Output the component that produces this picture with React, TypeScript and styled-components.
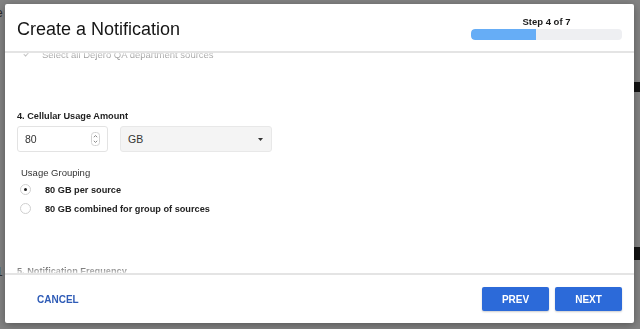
import React, { useLayoutEffect, useRef } from "react";
import styled, { createGlobalStyle } from "styled-components";

const GlobalStyle = createGlobalStyle`
  html, body { margin: 0; padding: 0; }
  body {
    width: 640px;
    height: 329px;
    overflow: hidden;
    background: #838383;
    font-family: "Liberation Sans", Arial, Helvetica, sans-serif;
  }
  * { box-sizing: border-box; }
`;

/* ---------- dimmed page behind the dialog ---------- */
const Backdrop = styled.div`
  width: 640px;
  height: 329px;
  display: flex;
  justify-content: space-between;
  background: #838383;
`;

const BackdropLeft = styled.div`
  display: flex;
  flex-direction: column;
  justify-content: space-between;
  margin-left: -4px;
  padding: 6px 0 50px;
  font-size: 12px;
  line-height: 14px;
  color: #2b2b2b;
`;

const BackdropRight = styled.div`
  display: flex;
  flex-direction: column;
  gap: 155px;
  padding-top: 82px;
`;

const Chip = styled.div<{ $h: number }>`
  width: 8px;
  height: ${(p) => p.$h}px;
  background: #121212;
`;

/* ---------- dialog ---------- */
const Overlay = styled.div`
  position: fixed;
  inset: 0;
  display: flex;
  padding: 4px 6px 6px 5px;
`;

const Modal = styled.div`
  flex: 1;
  display: flex;
  flex-direction: column;
  background: #ffffff;
  border-radius: 2px;
  box-shadow: 0 2px 8px rgba(0, 0, 0, 0.35);
  overflow: hidden;
`;

const Header = styled.header`
  height: 49px;
  flex: none;
  display: flex;
  align-items: flex-start;
  justify-content: space-between;
  padding: 12px 12px 0;
  border-bottom: 2px solid #e4e4e4;
`;

const Title = styled.h1`
  margin: 3px 0 0;
  font-size: 18px;
  line-height: 20px;
  font-weight: 400;
  color: #161616;
`;

const Progress = styled.div`
  width: 151px;
  display: flex;
  flex-direction: column;
  align-items: center;
  gap: 1px;
`;

const StepLabel = styled.div`
  font-size: 9.5px;
  line-height: 12px;
  font-weight: 700;
  color: #1a1a1a;
`;

const Track = styled.div`
  width: 100%;
  height: 11px;
  border-radius: 4px;
  background: #eeeff2;
  overflow: hidden;
`;

const Fill = styled.div`
  height: 100%;
  background: #66adf6;
  border-radius: 4px 0 0 4px;
`;

const Body = styled.div`
  flex: 1;
  overflow: hidden;
  -webkit-mask-image: linear-gradient(
    to bottom,
    rgba(0, 0, 0, 0.3) 0,
    #000 12px,
    #000 calc(100% - 10px),
    rgba(0, 0, 0, 0.2) 100%
  );
  mask-image: linear-gradient(
    to bottom,
    rgba(0, 0, 0, 0.3) 0,
    #000 12px,
    #000 calc(100% - 10px),
    rgba(0, 0, 0, 0.2) 100%
  );
`;

const Content = styled.div`
  display: flex;
  flex-direction: column;
  padding: 12px 12px 60px;
`;

const SectionTitle = styled.div<{ $gap?: number }>`
  margin-top: ${(p) => p.$gap ?? 0}px;
  font-size: 9.2px;
  line-height: 14px;
  font-weight: 700;
  color: #1e1e1e;
`;

const CheckRow = styled.label`
  height: 20px;
  display: flex;
  align-items: center;
  gap: 10px;
  padding-left: 3px;
  font-size: 9.5px;
  color: #555;
`;

const CheckBox = styled.span`
  width: 12px;
  height: 12px;
  display: flex;
  align-items: center;
  justify-content: center;
  color: #777;
`;

const FieldRow = styled.div`
  margin-top: 3px;
  display: flex;
  gap: 12px;
`;

const NumberField = styled.div`
  width: 91px;
  height: 26px;
  display: flex;
  align-items: center;
  justify-content: space-between;
  padding: 0 7px 0 7px;
  border: 1px solid #e3e3e3;
  border-radius: 3px;
  background: #fff;
  font-size: 10.5px;
  color: #333;
`;

const SelectField = styled.div`
  width: 152px;
  height: 26px;
  display: flex;
  align-items: center;
  justify-content: space-between;
  padding: 0 8px 0 7px;
  border: 1px solid #e8e8e8;
  border-radius: 3px;
  background: #f4f4f4;
  font-size: 10.5px;
  color: #333;
`;

const GroupLabel = styled.div`
  margin-top: 14px;
  margin-bottom: 1px;
  padding-left: 4px;
  font-size: 9.5px;
  line-height: 13px;
  color: #333;
`;

const RadioRow = styled.label`
  height: 19px;
  display: flex;
  align-items: center;
  gap: 14px;
  padding-left: 3px;
  font-size: 9.2px;
  font-weight: 700;
  color: #222;
`;

const Radio = styled.span<{ $checked?: boolean }>`
  width: 11px;
  height: 11px;
  border-radius: 50%;
  border: 1px solid #cfcfcf;
  background: #fff;
  display: flex;
  align-items: center;
  justify-content: center;
  &::after {
    content: "";
    width: 3px;
    height: 3px;
    border-radius: 50%;
    background: ${(p) => (p.$checked ? "#1e1e1e" : "transparent")};
  }
`;

const Footer = styled.footer`
  height: 50px;
  flex: none;
  display: flex;
  align-items: center;
  justify-content: space-between;
  padding: 0 12px;
  border-top: 2px solid #e4e4e4;
`;

const TextButton = styled.button`
  height: 24px;
  padding: 0 20px;
  border: none;
  background: none;
  font-family: inherit;
  font-size: 10px;
  font-weight: 700;
  color: #2f5cb7;
`;

const ButtonGroup = styled.div`
  display: flex;
  gap: 6px;
`;

const PrimaryButton = styled.button`
  width: 67px;
  height: 24px;
  border: none;
  border-radius: 2px;
  background: #2c6ad9;
  box-shadow: 0 1px 2px rgba(0, 0, 0, 0.2);
  font-family: inherit;
  font-size: 10px;
  font-weight: 700;
  color: #ffffff;
`;

const Spinner = () => (
  <svg width="9" height="14" viewBox="0 0 9 14" aria-hidden>
    <rect x="0.5" y="0.5" width="8" height="13" rx="3" fill="#fff" stroke="#d2d2d2" />
    <path d="M2.8 5.2 L4.5 3.6 L6.2 5.2" fill="none" stroke="#7a7a7a" strokeWidth="0.9" />
    <path d="M2.8 8.8 L4.5 10.4 L6.2 8.8" fill="none" stroke="#7a7a7a" strokeWidth="0.9" />
  </svg>
);

const Caret = () => (
  <svg width="5" height="3" viewBox="0 0 5 3" aria-hidden>
    <path d="M0 0 H5 L2.5 3 Z" fill="#333" />
  </svg>
);

const Check = () => (
  <svg width="7" height="6" viewBox="0 0 7 6" aria-hidden>
    <path d="M0.7 3.2 L2.6 5 L6.3 0.8" fill="none" stroke="currentColor" strokeWidth="1.1" />
  </svg>
);

export default function App() {
  const bodyRef = useRef<HTMLDivElement>(null);
  const step = 4;
  const total = 7;

  useLayoutEffect(() => {
    if (bodyRef.current) bodyRef.current.scrollTop = 21;
  }, []);

  return (
    <>
      <GlobalStyle />
      <Backdrop>
        <BackdropLeft>
          <span>e</span>
          <span>1</span>
        </BackdropLeft>
        <BackdropRight>
          <Chip $h={10} />
          <Chip $h={13} />
        </BackdropRight>
      </Backdrop>
      <Overlay>
        <Modal role="dialog">
          <Header>
            <Title>Create a Notification</Title>
            <Progress>
              <StepLabel>
                Step {step} of {total}
              </StepLabel>
              <Track>
                <Fill style={{ width: `${((step - 1) / total) * 100}%` }} />
              </Track>
            </Progress>
          </Header>
          <Body ref={bodyRef}>
            <Content>
              <CheckRow>
                <CheckBox>
                  <Check />
                </CheckBox>
                Select all Dejero QA department sources
              </CheckRow>
              <SectionTitle $gap={45}>4. Cellular Usage Amount</SectionTitle>
              <FieldRow>
                <NumberField>
                  <span>80</span>
                  <Spinner />
                </NumberField>
                <SelectField>
                  <span>GB</span>
                  <Caret />
                </SelectField>
              </FieldRow>
              <GroupLabel>Usage Grouping</GroupLabel>
              <RadioRow>
                <Radio $checked />
                80 GB per source
              </RadioRow>
              <RadioRow>
                <Radio />
                80 GB combined for group of sources
              </RadioRow>
              <SectionTitle $gap={46}>5. Notification Frequency</SectionTitle>
            </Content>
          </Body>
          <Footer>
            <TextButton>CANCEL</TextButton>
            <ButtonGroup>
              <PrimaryButton>PREV</PrimaryButton>
              <PrimaryButton>NEXT</PrimaryButton>
            </ButtonGroup>
          </Footer>
        </Modal>
      </Overlay>
    </>
  );
}
